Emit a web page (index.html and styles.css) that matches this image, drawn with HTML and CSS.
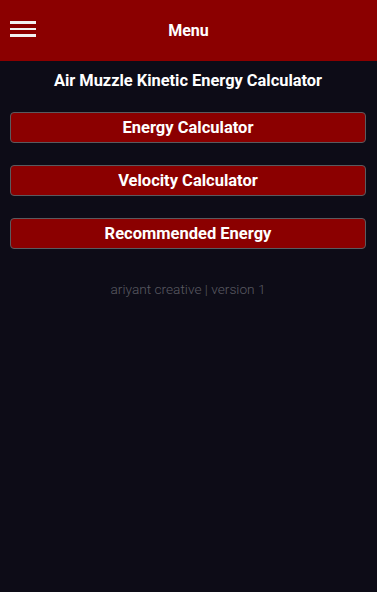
FILE: index.html
```html
<!DOCTYPE html>
<html>
<head>
<meta charset="utf-8">
<link rel="stylesheet" href="styles.css">
</head>
<body>
<header class="topbar">
  <div class="burger"><span></span><span></span><span></span></div>
  <div class="topbar-title">Menu</div>
</header>
<main class="content">
  <h1 class="page-title">Air Muzzle Kinetic Energy Calculator</h1>
  <div class="menu">
    <button class="menu-btn">Energy Calculator</button>
    <button class="menu-btn">Velocity Calculator</button>
    <button class="menu-btn">Recommended Energy</button>
  </div>
  <p class="footer">ariyant creative | version 1</p>
</main>
</body>
</html>
```
FILE: styles.css
```css
html, body {
  margin: 0;
  padding: 0;
  height: 100%;
}
body {
  background: #0d0c17;
  font-family: Roboto, "Liberation Sans", sans-serif;
  color: #fff;
}
.topbar {
  position: relative;
  height: 61px;
  background: #8b0000;
  display: flex;
  align-items: center;
  justify-content: center;
}
.burger {
  position: absolute;
  left: 10px;
  top: 21px;
  width: 26px;
  display: flex;
  flex-direction: column;
  gap: 4px;
}
.burger span {
  display: block;
  height: 2.5px;
  background: #f2f2f2;
}
.topbar-title {
  font-size: 16px;
  font-weight: 700;
  color: #fff;
}
.content {
  padding: 10px 11px 0 10px;
}
.page-title {
  margin: 0;
  font-size: 16.4px;
  line-height: 20px;
  font-weight: 700;
  text-align: center;
}
.menu {
  margin-top: 21px;
  display: flex;
  flex-direction: column;
  gap: 21px;
}
.menu-btn {
  height: 31px;
  width: 100%;
  background: #8b0000;
  border: 1px solid #5a5a5e;
  border-radius: 4px;
  color: #fff;
  font-family: Roboto, "Liberation Sans", sans-serif;
  font-size: 16.5px;
  font-weight: 700;
  padding: 0;
}
.menu-btn + .menu-btn {
  margin-top: 1px;
}
.footer {
  margin: 32px 0 0;
  text-align: center;
  font-size: 13.7px;
  font-weight: 300;
  color: #5a5a62;
}
```
